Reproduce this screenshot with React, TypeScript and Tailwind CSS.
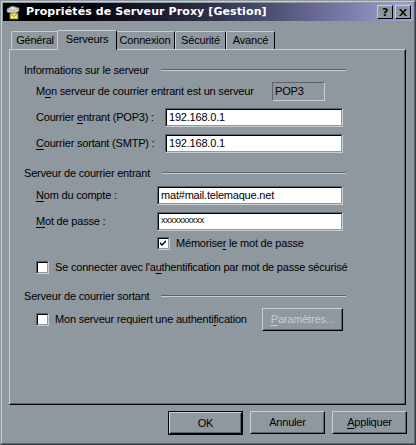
import React from "react";

const FACE = "bg-[#8f979f]";

function U({ children }: { children: React.ReactNode }) {
  return <span className="underline underline-offset-[2px] decoration-[1px]">{children}</span>;
}

function GroupHeader({ text }: { text: string }) {
  return (
    <div className="flex items-center h-[14px]">
      <span className="whitespace-nowrap">{text}</span>
      <div className="ml-[12px] flex-1 flex flex-col">
        <div className="h-px bg-[#5c636a]" />
        <div className="h-px bg-[#c9ced3]" />
      </div>
    </div>
  );
}

function Sunken({ className, children }: { className?: string; children?: React.ReactNode }) {
  return (
    <div className={"border border-t-[#5c636a] border-l-[#5c636a] border-b-[#c9ced3] border-r-[#c9ced3] " + (className || "")}>
      <div className="h-full w-full border border-t-black border-l-black border-b-[#8f979f] border-r-[#8f979f] bg-white flex items-center pl-[2px] overflow-hidden whitespace-nowrap">
        {children}
      </div>
    </div>
  );
}

function CheckBox({ checked }: { checked?: boolean }) {
  return (
    <div className="w-[13px] h-[13px] shrink-0 border border-t-[#5c636a] border-l-[#5c636a] border-b-[#c9ced3] border-r-[#c9ced3]">
      <div className="w-full h-full border border-t-black border-l-black border-b-[#8f979f] border-r-[#8f979f] bg-white flex items-center justify-center">
        {checked && (
          <svg width="7" height="7" viewBox="0 0 7 7">
            <path d="M0 2 L2 4 L6 0 L6 2 L2 6 L0 4 Z" fill="black" />
          </svg>
        )}
      </div>
    </div>
  );
}

function Button({ children, def, disabled, className }: { children: React.ReactNode; def?: boolean; disabled?: boolean; className?: string }) {
  const inner = (
    <div className="h-full w-full border border-t-[#c9ced3] border-l-[#c9ced3] border-b-black border-r-black">
      <div className={"h-full w-full border border-t-[#8f979f] border-l-[#8f979f] border-b-[#5c636a] border-r-[#5c636a] flex items-center justify-center " + (disabled ? "text-[#c9ced3]" : "")}>
        {children}
      </div>
    </div>
  );
  return (
    <div className={"h-[23px] " + (def ? "border border-black " : "") + (className || "")}>{inner}</div>
  );
}

function TitleIcon() {
  return (
    <svg width="16" height="16" viewBox="0 0 16 16">
      <path d="M2 5 L7 2 L14 4 L14 7 L9 10 L2 8 Z" fill="#d8d8d8" stroke="#707070" strokeWidth="0.8" />
      <path d="M2 5 L9 7 L14 4" fill="none" stroke="#a0a0a0" strokeWidth="0.8" />
      <rect x="5" y="9" width="8" height="6" fill="#f8f070" stroke="#7a7020" strokeWidth="0.8" />
      <path d="M5 9 L9 12.5 L13 9" fill="none" stroke="#7a7020" strokeWidth="0.8" />
    </svg>
  );
}

function Tab({ label, selected, width }: { label: string; selected?: boolean; width: number }) {
  return (
    <div
      className={
        "relative flex items-center justify-center border-l border-t border-r border-l-[#c9ced3] border-t-[#c9ced3] border-r-black rounded-t-[2px] " +
        (selected ? "h-[20px] -mx-[2px] z-10 bg-[#8f979f] -mb-px pb-[2px]" : "h-[18px] mt-[2px]")
      }
      style={{ width }}
    >
      {label}
    </div>
  );
}

export default function App() {
  return (
    <div
      className={"w-[416px] h-[445px] " + FACE + " text-black overflow-hidden"}
      style={{ fontFamily: '"Liberation Sans", Arial, sans-serif', fontSize: 11, letterSpacing: -0.2 }}
    >
      <div className="w-full h-full border border-t-[#8f979f] border-l-[#8f979f] border-b-[#3a3f44] border-r-[#3a3f44]">
        <div className="w-full h-full border border-t-[#c9ced3] border-l-[#c9ced3] border-b-[#5c636a] border-r-[#5c636a] flex flex-col px-[1px] pt-[1px]">
          {/* Title bar */}
          <div className="h-[18px] flex items-center bg-gradient-to-r from-black via-[#2e2e4a] to-[#a4a4dc] pl-[2px] pr-[2px]">
            <TitleIcon />
            <span
              className="ml-[5px] text-white font-bold whitespace-nowrap"
              style={{ fontFamily: '"DejaVu Sans", Verdana, sans-serif', fontSize: 11, letterSpacing: 0.1 }}
            >
              Propriétés de Serveur Proxy [Gestion]
            </span>
            <div className="ml-auto flex gap-[2px] items-center">
              <div className="w-[16px] h-[14px] border border-t-[#c9ced3] border-l-[#c9ced3] border-b-black border-r-black bg-[#8f979f] flex items-center justify-center font-bold text-[11px] leading-none" style={{ fontFamily: '"DejaVu Sans", sans-serif' }}>?</div>
              <div className="w-[16px] h-[14px] border border-t-[#c9ced3] border-l-[#c9ced3] border-b-black border-r-black bg-[#8f979f] flex items-center justify-center">
                <svg width="8" height="7" viewBox="0 0 8 7">
                  <path d="M0 0 L2 0 L4 2.5 L6 0 L8 0 L5 3.5 L8 7 L6 7 L4 4.5 L2 7 L0 7 L3 3.5 Z" fill="black" />
                </svg>
              </div>
            </div>
          </div>

          {/* Tabs */}
          <div className="pl-[8px] mt-[8px] flex items-end h-[20px]">
            <Tab label="Général" width={48} />
            <Tab label="Serveurs" selected width={60} />
            <Tab label="Connexion" width={60} />
            <Tab label="Sécurité" width={51} />
            <Tab label="Avancé" width={49} />
          </div>

          {/* Panel */}
          <div className="ml-[6px] w-[397px] h-[356px] border border-t-[#c9ced3] border-l-[#c9ced3] border-b-black border-r-black">
            <div className="w-full h-full border border-transparent border-b-[#5c636a] border-r-[#5c636a] pl-[13px] flex flex-col">
              <div className="mt-[12px] w-[322px]">
                <GroupHeader text="Informations sur le serveur" />
              </div>
              <div className="mt-[5px] h-[19px] flex items-center pl-[12px]">
                <span className="w-[236px]">M<U>o</U>n serveur de courrier entrant est un serveur</span>
                <div className="w-[53px] h-[19px] border border-t-[#5c636a] border-l-[#5c636a] border-b-[#c9ced3] border-r-[#c9ced3] flex items-center pl-[2px]">POP3</div>
              </div>
              <div className="mt-[7px] h-[19px] flex items-center pl-[12px]">
                <span className="w-[129px]">Courrier <U>e</U>ntrant (POP3) :</span>
                <Sunken className="w-[178px] h-[19px]">192.168.0.1</Sunken>
              </div>
              <div className="mt-[7px] h-[19px] flex items-center pl-[12px]">
                <span className="w-[129px]"><U>C</U>ourrier sortant (SMTP) :</span>
                <Sunken className="w-[178px] h-[19px]">192.168.0.1</Sunken>
              </div>

              <div className="mt-[13px] w-[322px]">
                <GroupHeader text="Serveur de courrier entrant" />
              </div>
              <div className="mt-[6px] h-[19px] flex items-center pl-[12px]">
                <span className="w-[121px]"><U>N</U>om du compte :</span>
                <Sunken className="w-[186px] h-[19px]">mat#mail.telemaque.net</Sunken>
              </div>
              <div className="mt-[7px] h-[19px] flex items-center pl-[12px]">
                <span className="w-[121px]"><U>M</U>ot de passe :</span>
                <Sunken className="w-[186px] h-[19px]">
                  <span className="text-[9px] leading-none -mt-[3px]">xxxxxxxxxx</span>
                </Sunken>
              </div>
              <div className="mt-[6px] h-[13px] flex items-center pl-[133px]">
                <CheckBox checked />
                <span className="ml-[6px] whitespace-nowrap">Mémorise<U>r</U> le mot de passe</span>
              </div>
              <div className="mt-[11px] h-[13px] flex items-center pl-[12px]">
                <CheckBox />
                <span className="ml-[6px] whitespace-nowrap">Se connecter avec l'a<U>u</U>thentification par mot de passe sécurisé</span>
              </div>

              <div className="mt-[15px] w-[322px]">
                <GroupHeader text="Serveur de courrier sortant" />
              </div>
              <div className="mt-[5px] h-[22px] flex items-center pl-[12px]">
                <CheckBox />
                <span className="ml-[6px] w-[207px] whitespace-nowrap">Mon serveur requiert une authenti<U>f</U>ication</span>
                <Button disabled className="w-[81px] h-[22px]">
                  <span><U>P</U>aramètres...</span>
                </Button>
              </div>
            </div>
          </div>

          {/* Bottom buttons */}
          <div className="mt-[6px] flex justify-end gap-[7px] pr-[6px]">
            <Button def className="w-[75px] h-[24px]">OK</Button>
            <Button className="w-[75px]">Annuler</Button>
            <Button className="w-[75px]"><span><U>A</U>ppliquer</span></Button>
          </div>
        </div>
      </div>
    </div>
  );
}
